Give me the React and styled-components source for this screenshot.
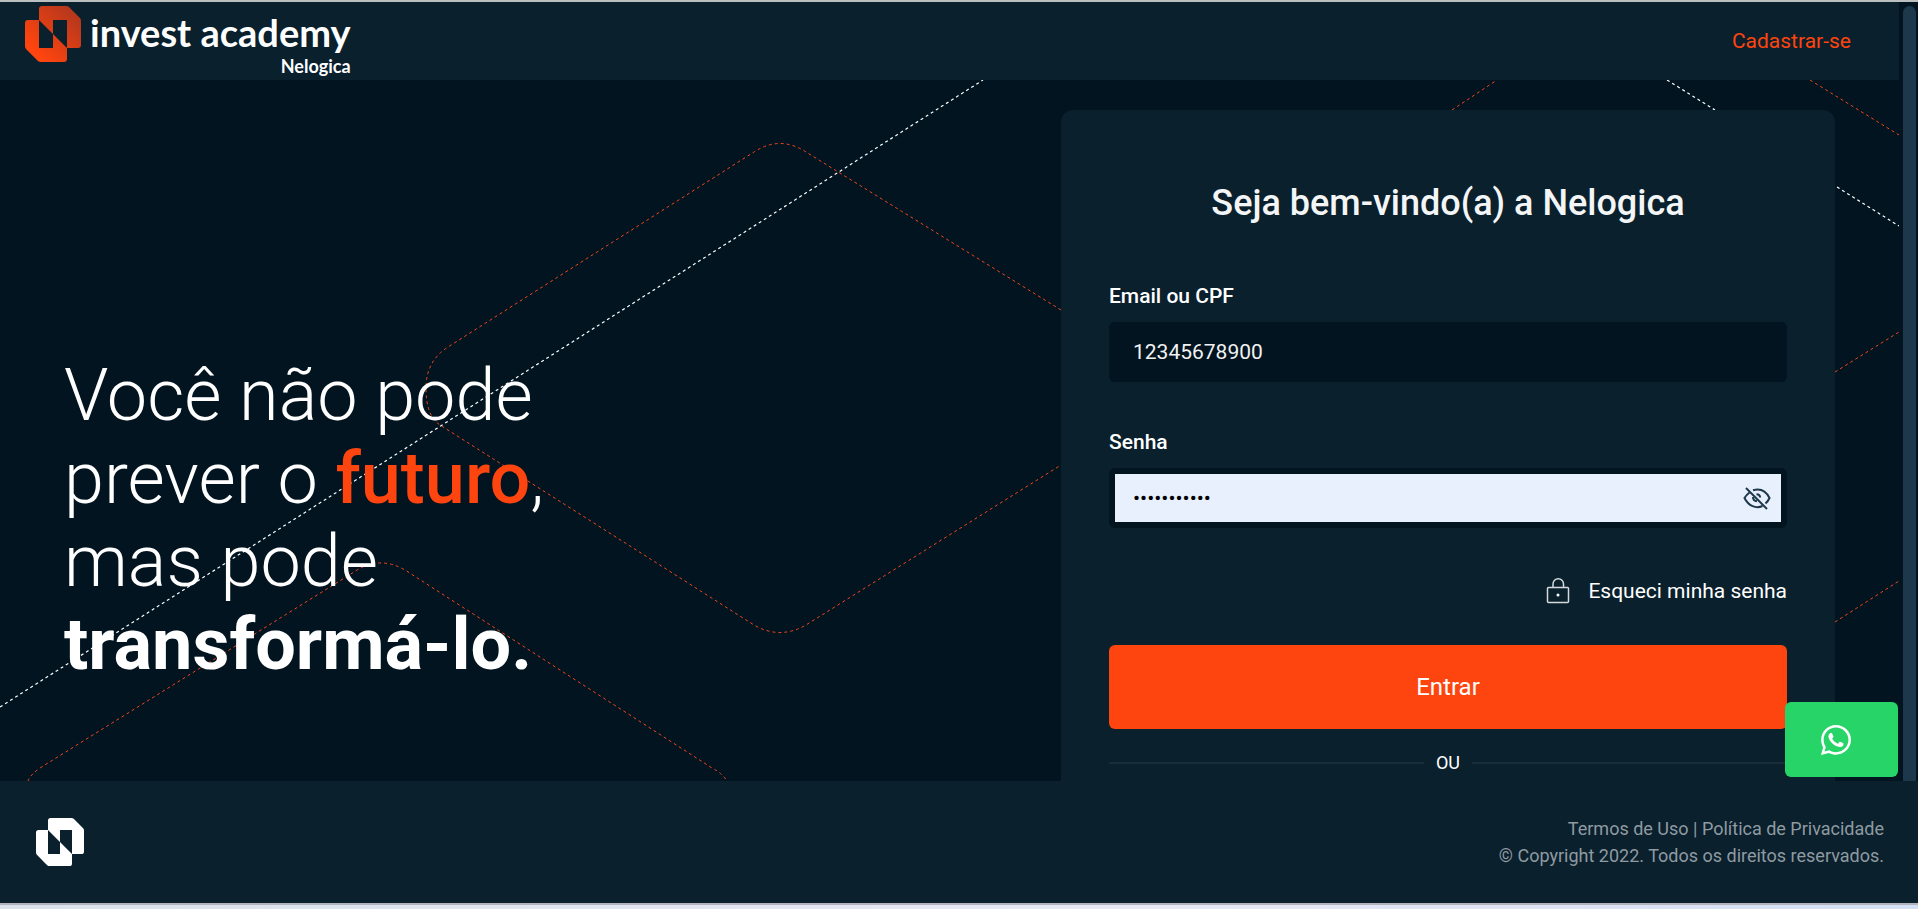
import React from 'react';
import styled, { createGlobalStyle } from 'styled-components';

const GlobalStyle = createGlobalStyle`
  *, *::before, *::after {
    box-sizing: border-box;
  }

  body {
    margin: 0;
    background: #01141f;
    color: #fff;
    font-family: Roboto, sans-serif;
    font-size: 21px;
    overflow: hidden;
  }

  h1, h2, p {
    margin: 0;
  }
`;

const Window = styled.div`
  display: flex;
  flex-direction: column;
  height: 100vh;
  border-top: 2px solid #bcbfc0;
`;

const Viewport = styled.div`
  display: flex;
  flex: 1;
  min-height: 0;
`;

const Page = styled.div`
  display: flex;
  flex-direction: column;
  flex: 1;
  min-width: 0;
`;

const ScrollTrack = styled.div`
  display: flex;
  flex: 0 0 19px;
  padding: 4px 2px 0 4px;
`;

const ScrollThumb = styled.div`
  flex: 1;
  border-radius: 8px 8px 0 0;
  background: #1e384b;
`;

const Header = styled.header`
  display: flex;
  flex: 0 0 78px;
  align-items: center;
  justify-content: space-between;
  padding: 0 48px 0 25px;
  background: #0a202d;
`;

const Brand = styled.a`
  display: flex;
  align-self: flex-start;
  gap: 9px;
  padding-top: 4px;
  color: #fff;
  text-decoration: none;
`;

const BrandText = styled.span`
  display: flex;
  flex-direction: column;
  align-items: flex-end;
  font-family: Lato, sans-serif;
`;

const BrandName = styled.span`
  font-size: 38px;
  font-weight: 700;
  line-height: 52px;
`;

const BrandOwner = styled.span`
  font-size: 18px;
  font-weight: 700;
  line-height: 16px;
`;

const SignUp = styled.a`
  color: #fe440f;
  text-decoration: none;
`;

const Main = styled.main`
  position: relative;
  display: flex;
  flex: 1;
  justify-content: space-between;
  min-height: 0;
  padding: 30px 64px 0;
  overflow: hidden;
`;

const Backdrop = styled.svg`
  position: absolute;
  top: 0;
  left: 0;
  fill: none;
  stroke: #f2451a;
  stroke-dasharray: 3 3;
`;

const Slogan = styled.h1`
  position: relative;
  padding-top: 244px;
  font-size: 72px;
  font-weight: 300;
  line-height: 83px;

  strong {
    font-weight: 700;
  }
`;

const Highlight = styled.em`
  color: #fe440f;
  font-style: normal;
  font-weight: 500;
`;

const Card = styled.form`
  position: relative;
  display: flex;
  flex-direction: column;
  flex: 0 0 774px;
  height: 900px;
  padding: 72px 48px 0;
  border-radius: 12px;
  background: #0a202d;
`;

const Title = styled.h2`
  margin-bottom: 60px;
  color: #f4f5f6;
  font-size: 36px;
  font-weight: 500;
  line-height: 42px;
  text-align: center;
`;

const Field = styled.div`
  display: flex;
  flex-direction: column;
  gap: 14px;
  margin-bottom: 48px;
`;

const Label = styled.label`
  font-weight: 500;
  line-height: 24px;
`;

const InputBox = styled.div`
  position: relative;
  display: flex;
  height: 60px;
  padding: 6px;
  border-radius: 6px;
  background: #01141f;
`;

const Input = styled.input`
  flex: 1;
  min-width: 0;
  padding: 0 18px;
  border: 0;
  outline: 0;
  background: ${(props) => (props.$filled ? '#e8f0fe' : 'transparent')};
  color: ${(props) => (props.$filled ? '#000' : '#f1f2f3')};
  font: inherit;
`;

const IconButton = styled.button`
  position: absolute;
  top: 16px;
  right: 15px;
  display: flex;
  padding: 0;
  border: 0;
  background: none;
  color: #1e384b;
`;

const Forgot = styled.a`
  display: flex;
  align-items: center;
  align-self: flex-end;
  gap: 18px;
  height: 30px;
  color: #fff;
  line-height: 30px;
  text-decoration: none;
`;

const Submit = styled.button`
  height: 84px;
  margin-top: 39px;
  border: 0;
  border-radius: 6px;
  background: #fe440f;
  color: #fff;
  font-family: inherit;
  font-size: 24px;
`;

const Divider = styled.div`
  display: flex;
  align-items: center;
  gap: 12px;
  margin-top: 22px;
  font-size: 18px;
  line-height: 24px;

  &::before,
  &::after {
    content: '';
    flex: 1;
    height: 2px;
    background: #182c39;
  }
`;

const WhatsApp = styled.a`
  position: absolute;
  right: 1px;
  bottom: 4px;
  display: flex;
  align-items: center;
  width: 113px;
  height: 75px;
  padding-left: 36px;
  border-radius: 6px;
  background: #27d468;
  color: #fff;
`;

const Footer = styled.footer`
  display: flex;
  flex: 0 0 122px;
  align-items: center;
  justify-content: space-between;
  padding: 0 34px 0 36px;
  background: #0a202d;
`;

const Legal = styled.div`
  color: #8f9aa1;
  font-size: 18px;
  line-height: 27px;
  text-align: right;

  a {
    color: inherit;
    text-decoration: none;
  }
`;

const BottomEdge = styled.div`
  flex: 0 0 6px;
  border-top: 2px solid #b0b3bb;
  background: linear-gradient(90deg, #d8e1ec, #e6e8f5 60%, #d3dff4);
`;

const Logo = ({ size, fill }) => (
  <svg width={size} height={size} viewBox="0 0 56 56" aria-hidden="true">
    <defs>
      <linearGradient id="flame" x1="0" y1="1" x2="1" y2="0">
        <stop offset="0.2" stopColor="#fe440f" />
        <stop offset="1" stopColor="#a8351f" />
      </linearGradient>
    </defs>
    <path
      fill={fill}
      fillRule="evenodd"
      d="M17 0H41Q43 0 44 1L55 12Q56 13 56 15V39Q56 42 53 42H42V53Q42 56 39 56H16Q14 56 13 55L1 43Q0 42 0 40V17Q0 14 3 14H14V3Q14 0 17 0ZM14 14V42H28V28ZM28 14V28L42 42V14Z"
    />
  </svg>
);

const EyeOff = () => (
  <svg width="30" height="30" viewBox="0 0 30 30" fill="none" stroke="currentColor" strokeWidth="2" aria-hidden="true">
    <path d="M4 4l21 21" />
    <path d="M11 6.2C18 4.2 24 7 27.5 14c-1 2.3-2.3 4-4 5.5M7.5 8.500C5.5 10 4 11.5 2.5 14c4 8 11.5 11 18 8" />
    <path d="M14.5 10.2c2 0 3.5 1.5 3.7 3.3M11 13c0 2.5 1.5 4 4 4.2" />
  </svg>
);

const Lock = () => (
  <svg width="24" height="28" viewBox="0 0 24 28" fill="none" stroke="#d5d9dc" strokeWidth="1.5" aria-hidden="true">
    <rect x="1.5" y="10.5" width="21" height="15" rx="1" />
    <path d="M7 10V7a5 5 0 0 1 10.5 0v3" />
    <circle cx="12" cy="18" r="1.5" fill="#fff" stroke="none" />
  </svg>
);

const Phone = () => (
  <svg width="30" height="30" viewBox="0 0 448 448" fill="currentColor" aria-hidden="true">
    <path d="M380.9 65.1C339 23.100 283.200 0 223.900 0 101.500 0 1.900 99.600 1.900 222c0 39.100 10.200 77.300 29.600 111L0 448l117.700-30.900c32.400 17.700 68.900 27 106.100 27h.1c122.300 0 224.100-99.600 224.100-222 0-59.300-25.200-115-67.100-157zM223.900 406.700c-33.200 0-65.700-8.900-94-25.700l-6.700-4-69.800 18.300L72 327.200l-4.400-7C49.100 290.800 39.400 256.900 39.400 222c0-101.700 82.800-184.500 184.600-184.500 49.300 0 95.600 19.200 130.400 54.100s56.200 81.200 56.100 130.500c0 101.800-84.900 184.600-186.600 184.600zM325.100 268.500c-5.500-2.800-32.800-16.200-37.900-18-5.100-1.900-8.800-2.800-12.500 2.800s-14.300 18-17.600 21.800c-3.200 3.700-6.500 4.200-12 1.400-32.600-16.300-54-29.100-75.500-66-5.700-9.800 5.700-9.100 16.300-30.300 1.800-3.700.9-6.900-.5-9.700s-12.500-30.100-17.100-41.200c-4.500-10.800-9.100-9.300-12.500-9.500-3.200-.2-6.900-.2-10.600-.2s-9.700 1.400-14.800 6.900c-5.100 5.600-19.400 19-19.400 46.300s19.900 53.700 22.600 57.400c2.800 3.700 39.100 59.700 94.800 83.800 35.200 15.200 49 16.500 66.600 13.900 10.700-1.600 32.800-13.400 37.400-26.400s4.600-24.100 3.200-26.400c-1.300-2.500-5-3.900-10.500-6.600z" />
  </svg>
);

const Lines = () => (
  <Backdrop width="1899" height="701" aria-hidden="true">
    <path d="M1061 230L806 72Q780 55 754 72L448 267Q426 281 426 308Q426 336 440 345L754 545Q780 560 806 545L1061 385" />
    <path d="M28 701Q30 695 40 688L354 492Q379 475 405 490L712 688Q722 693 727 701" />
    <path d="M1452 30L1497 0M1810 0L1899 55M1835 292L1899 252M1835 542L1899 501" />
    <path d="M0 627L983 0M1667 0L1715 30M1837 107L1899 146" stroke="#fff" strokeWidth="1.2" />
  </Backdrop>
);

const App = () => (
  <Window>
    <GlobalStyle />
    <Viewport>
      <Page>
        <Header>
          <Brand href="#">
            <Logo size={56} fill="url(#flame)" />
            <BrandText>
              <BrandName>invest academy</BrandName>
              <BrandOwner>Nelogica</BrandOwner>
            </BrandText>
          </Brand>
          <SignUp href="#">Cadastrar-se</SignUp>
        </Header>
        <Main>
          <Lines />
          <Slogan>
            Você não pode
            <br />
            prever o <Highlight>futuro</Highlight>,
            <br />
            mas pode
            <br />
            <strong>transformá-lo.</strong>
          </Slogan>
          <Card>
            <Title>Seja bem-vindo(a) a Nelogica</Title>
            <Field>
              <Label htmlFor="login">Email ou CPF</Label>
              <InputBox>
                <Input id="login" type="text" defaultValue="12345678900" />
              </InputBox>
            </Field>
            <Field>
              <Label htmlFor="password">Senha</Label>
              <InputBox>
                <Input id="password" type="password" defaultValue="12345678900" $filled />
                <IconButton type="button" aria-label="Mostrar senha">
                  <EyeOff />
                </IconButton>
              </InputBox>
            </Field>
            <Forgot href="#">
              <Lock />
              Esqueci minha senha
            </Forgot>
            <Submit type="button">Entrar</Submit>
            <Divider>OU</Divider>
          </Card>
          <WhatsApp href="#" aria-label="WhatsApp">
            <Phone />
          </WhatsApp>
        </Main>
      </Page>
      <ScrollTrack>
        <ScrollThumb />
      </ScrollTrack>
    </Viewport>
    <Footer>
      <Logo size={48} fill="#fff" />
      <Legal>
        <p>
          <a href="#">Termos de Uso</a> | <a href="#">Política de Privacidade</a>
        </p>
        <p>© Copyright 2022. Todos os direitos reservados.</p>
      </Legal>
    </Footer>
    <BottomEdge />
  </Window>
);

export default App;
